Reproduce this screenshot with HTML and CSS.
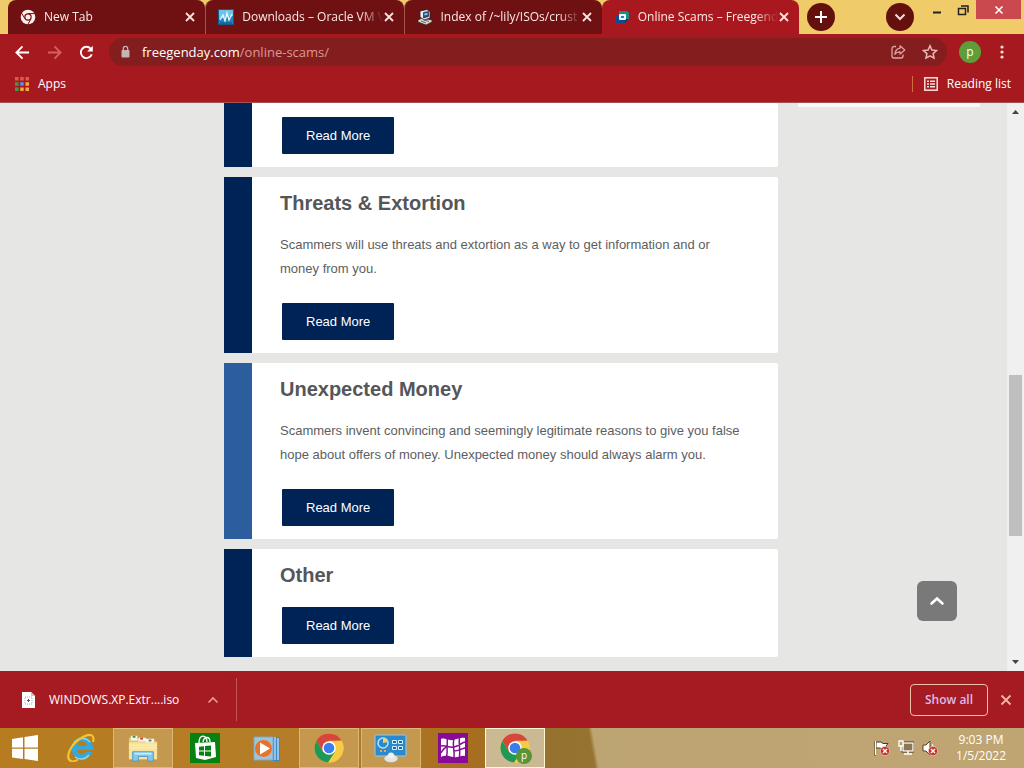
FILE: index.html
```html
<!DOCTYPE html>
<html lang="en">
<head>
<meta charset="utf-8">
<title>Online Scams – Freegenday</title>
<link rel="stylesheet" href="styles.css">
</head>
<body>
<svg class="defs" aria-hidden="true">
  <symbol id="cross" viewBox="0 0 12 12"><path d="M2 2l8 8M10 2l-8 8" fill="none" stroke="currentColor" stroke-width="1.800"/></symbol>
  <symbol id="chrome" viewBox="0 0 30 30">
    <circle cx="15" cy="15" r="14.5" fill="#f4c63b"/>
    <path d="M2.4 7.8A14.5 14.5 0 0 1 27.6 7.8L15 8.3 8.7 18.6z" fill="#d8453a"/>
    <path d="M2.4 7.8A14.5 14.5 0 0 0 14.2 29.5L21.3 18.6 8.7 18.6z" fill="#1f9a55"/>
    <path d="M27.6 7.8H15L21.3 18.6 14.2 29.5A14.5 14.5 0 0 0 27.6 7.8z" fill="#f8cb45"/>
    <circle cx="15" cy="15" r="6.8" fill="#fff"/><circle cx="15" cy="15" r="5.3" fill="#3b7ded"/>
  </symbol>
  <symbol id="badge" viewBox="0 0 10 10"><circle cx="5" cy="5" r="4.6" fill="#c8322e" stroke="#f0c8b8" stroke-width=".7"/><path d="M3 3l4 4M7 3L3 7" stroke="#fff" stroke-width="1.4"/></symbol>
</svg>

<header class="browser">
  <div class="tabstrip">
    <nav class="tabs" aria-label="Tabs">
      <div class="tab">
        <svg class="favicon" viewBox="0 0 16 16"><circle cx="8" cy="8" r="7.3" fill="#fbefed"/><circle cx="8" cy="8" r="3.7" fill="#6f1013"/><circle cx="8" cy="8" r="2.5" fill="#fbefed"/><path d="M8 4.6h6.8M5 9.8L1.500 4M11 9.800L7.800 15.500" stroke="#6f1013" stroke-width="1"/></svg>
        <a class="tab-title" href="#new">New Tab</a>
        <button class="close" aria-label="Close New Tab"><svg><use href="#cross"/></svg></button>
      </div>
      <div class="tab">
        <svg class="favicon" viewBox="0 0 16 16"><rect x=".5" y=".5" width="15" height="15" fill="#1f83bd" stroke="#155a87"/><path d="M1 1h14v6L1 10z" fill="#6dc2e8"/><path d="M2 11l3-5 2 6 2-8 2 7 3-6" fill="none" stroke="#e6f8ff" stroke-width="1.3"/><path d="M2 14h12" stroke="#124d79"/></svg>
        <a class="tab-title" href="#downloads">Downloads – Oracle VM V</a>
        <button class="close" aria-label="Close Downloads"><svg><use href="#cross"/></svg></button>
      </div>
      <div class="tab">
        <svg class="favicon" viewBox="0 0 16 16"><path d="M1 11l4-2 10 2v2l-6 3-8-3z" fill="#ddd8cc" stroke="#222" stroke-width=".7"/><path d="M3 2l7-1.500 3 2V9L7 11 3 8z" fill="#f1eee4" stroke="#222" stroke-width=".8"/><path d="M6.500 3.500l5-1v5L6.500 9z" fill="#204fa3" stroke="#111" stroke-width=".6"/><path d="M7.500 4.500l3-.8v2l-3 .8z" fill="#8dc4f3"/><path d="M4 12l5 2M7 11l5 1.500" stroke="#333" stroke-width=".7"/></svg>
        <a class="tab-title" href="#index">Index of /~lily/ISOs/crust</a>
        <button class="close" aria-label="Close Index"><svg><use href="#cross"/></svg></button>
      </div>
      <div class="tab current">
        <svg class="favicon" viewBox="0 0 16 16"><path d="M5 2h8l2 2v6H5z" fill="#168f88"/><path d="M1 6h10v8H1z" fill="#134b91"/><path d="M11 10h3l-3 4z" fill="#0b3764"/><rect x="5" y="5" width="7" height="6" rx="1" fill="#eff8ff"/><rect x="7" y="7" width="3" height="2" fill="#1787b7"/></svg>
        <a class="tab-title" href="#scams" aria-current="page">Online Scams – Freegend</a>
        <button class="close" aria-label="Close Online Scams"><svg><use href="#cross"/></svg></button>
      </div>
    </nav>
    <button class="round new-tab" aria-label="New tab"><svg viewBox="0 0 12 12"><path d="M6 0v12M0 6h12" stroke="#fff" stroke-width="2"/></svg></button>
    <button class="round" aria-label="Search tabs"><svg viewBox="0 0 12 12"><path d="M1.5 3.5L6 8l4.500-4.500" fill="none" stroke="#f6dcd6" stroke-width="2"/></svg></button>
    <div class="window-controls">
      <button aria-label="Minimize"><svg viewBox="0 0 12 12"><path d="M2 8.500h8" stroke="#222" stroke-width="2"/></svg></button>
      <button aria-label="Restore"><svg viewBox="0 0 12 12"><path d="M1.500 4.500h7v6h-7zM4 2h7v6.500" fill="none" stroke="#222" stroke-width="1.500"/></svg></button>
      <button class="quit" aria-label="Close"><svg viewBox="0 0 12 12"><path d="M2.500 2.500l7 7M9.500 2.500l-7 7" stroke="#fff" stroke-width="1.600"/></svg></button>
    </div>
  </div>

  <div class="toolbar">
    <button class="tool" aria-label="Back"><svg viewBox="0 0 16 16"><path d="M15 8H2M8 1.500L1.500 8 8 14.500" fill="none" stroke="#fff" stroke-width="2"/></svg></button>
    <button class="tool" aria-label="Forward"><svg viewBox="0 0 16 16"><path d="M1 8h13M8 1.500L14.500 8 8 14.500" fill="none" stroke="#d4605d" stroke-width="2"/></svg></button>
    <button class="tool" aria-label="Reload"><svg viewBox="0 0 16 16"><path d="M13.600 10A6 6 0 1 1 12.500 4" fill="none" stroke="#fff" stroke-width="2"/><path d="M14.700.800v6H8.700z" fill="#fff"/></svg></button>
    <div class="address">
      <svg class="lock" viewBox="0 0 10 14"><rect x="1" y="5" width="8" height="7.500" rx="1" fill="#c4b4b5"/><path d="M2.800 5V3.600a2.200 2.200 0 0 1 4.400 0V5" fill="none" stroke="#c4b4b5" stroke-width="1.300"/></svg>
      <a class="url" href="#scams">freegenday.com<span>/online-scams/</span></a>
      <button class="small" aria-label="Share"><svg viewBox="0 0 16 16"><path d="M6 2.500H4a2 2 0 0 0-2 2V12a2 2 0 0 0 2 2h7a2 2 0 0 0 2-2v-1.500" fill="none" stroke="#dda7a5" stroke-width="1.300"/><path d="M10 1.800L14.800 6 10 10V7.800C7.500 7.600 6 8.500 4.800 10.300 5.200 7 6.800 4.700 10 4.200z" fill="none" stroke="#dda7a5" stroke-width="1.200" stroke-linejoin="round"/></svg></button>
      <button class="small" aria-label="Bookmark"><svg viewBox="0 0 16 16"><path d="M8 1.800l1.900 4.200 4.600.5-3.400 3.100.9 4.500L8 11.800l-4 2.300.9-4.500L1.500 6.500 6.100 6z" fill="none" stroke="#e9b9b5" stroke-width="1.500"/></svg></button>
    </div>
    <button class="avatar" aria-label="Profile">p</button>
    <button class="menu" aria-label="Menu"><svg viewBox="0 0 4 14"><g fill="#f6dcd6"><circle cx="2" cy="2" r="1.600"/><circle cx="2" cy="7" r="1.600"/><circle cx="2" cy="12" r="1.600"/></g></svg></button>
  </div>

  <nav class="bookmarks" aria-label="Bookmarks">
    <a href="#apps"><svg class="apps" viewBox="0 0 14 14"><g fill="#e5574e"><path d="M0 0h3.500v3.500H0zM5.200 0h3.500v3.500H5.200zM10.500 0H14v3.500h-3.500z"/></g><path d="M0 5.200h3.500v3.500H0zM0 10.500h3.500V14H0z" fill="#3f9a4e"/><path d="M5.200 5.200h3.500v3.500H5.200z" fill="#5a8df0"/><path d="M10.500 5.200H14v3.500h-3.500zM5.200 10.500h3.500V14H5.200zM10.500 10.500H14V14h-3.500z" fill="#f4a93c"/></svg>Apps</a>
    <a class="reading" href="#reading"><svg class="list" viewBox="0 0 14 14"><rect x=".8" y=".8" width="12.400" height="12.400" fill="none" stroke="#f8e2dc" stroke-width="1.500"/><path d="M3 4.200h2M6 4.200h5M3 7h2M6 7h5M3 9.800h2M6 9.800h5" stroke="#f8e2dc" stroke-width="1.500"/></svg>Reading list</a>
  </nav>
</header>

<div class="viewport">
  <div class="page">
    <main class="cards">
      <article class="card"><a class="more" href="#more">Read More</a></article>
      <article class="card">
        <h2>Threats &amp; Extortion</h2>
        <p>Scammers will use threats and extortion as a way to get information and or money from you.</p>
        <a class="more" href="#threats">Read More</a>
      </article>
      <article class="card light">
        <h2>Unexpected Money</h2>
        <p>Scammers invent convincing and seemingly legitimate reasons to give you false hope about offers of money. Unexpected money should always alarm you.</p>
        <a class="more" href="#money">Read More</a>
      </article>
      <article class="card">
        <h2>Other</h2>
        <a class="more" href="#other">Read More</a>
      </article>
    </main>
    <aside class="side"></aside>
    <button class="to-top" aria-label="Back to top"><svg viewBox="0 0 16 16"><path d="M2.500 10.500L8 5.500l5.500 5" fill="none" stroke="#fff" stroke-width="2.600" stroke-linecap="round"/></svg></button>
  </div>
  <div class="scrollbar" aria-hidden="true">
    <svg viewBox="0 0 17 17"><path d="M5 11h7L8.500 7z" fill="#444"/></svg>
    <div class="track"><div class="before"></div><div class="thumb"></div><div class="after"></div></div>
    <svg viewBox="0 0 17 17"><path d="M5 6h7l-3.500 4z" fill="#444"/></svg>
  </div>
</div>

<section class="downloads" aria-label="Downloads">
  <div class="download">
    <svg class="file" viewBox="0 0 13 16"><path d="M0 0h9l4 4v12H0z" fill="#fff"/><path d="M9 0v4h4z" fill="#c8c8c8"/><rect x="3" y="5" width="7" height="7" fill="none" stroke="#aaa" stroke-dasharray="1 1"/><path d="M6.500 7v3M5 8.500h3" stroke="#555"/></svg>
    <a href="#file">WINDOWS.XP.Extr....iso</a>
    <button aria-label="Download options"><svg viewBox="0 0 12 12"><path d="M1.500 8.500L6 4l4.500 4.500" fill="none" stroke="#ee9c94" stroke-width="1.600"/></svg></button>
  </div>
  <button class="show-all">Show all</button>
  <button class="dismiss" aria-label="Close downloads"><svg viewBox="0 0 12 12"><path d="M1.500 1.500l9 9M10.500 1.500l-9 9" stroke="#f0b9a8" stroke-width="1.800"/></svg></button>
</section>

<footer class="taskbar">
  <button class="start" aria-label="Start"><svg viewBox="0 0 28 28"><path d="M1 5l11-1.800v10.200H1zM13.500 3L27 1v12.400H13.500zM1 14.800h11V25L1 23.400zM13.500 14.800H27V27l-13.500-2z" fill="#fff"/></svg></button>
  <button class="task" aria-label="Internet Explorer"><svg viewBox="0 0 30 30"><path d="M16 4a11 11 0 1 0 10.500 15h-6.300A5 5 0 0 1 11 17h16A11 11 0 0 0 16 4zM11 13a5 5 0 0 1 10 0z" fill="#35a9de" fill-rule="evenodd"/><path d="M7 12a10 10 0 0 1 17-3" fill="none" stroke="#8bdaf5" stroke-width="1.500"/><path d="M9 24a10 10 0 0 0 14-2" fill="none" stroke="#8bdaf5" stroke-width="1.500"/><path d="M5 28C-2 25 5 10 17 4c8-4 12-2 10 5" fill="none" stroke="#f6c42d" stroke-width="2.200"/><path d="M4 27.500c3 1.500 6 .5 8-1" fill="none" stroke="#f6c42d" stroke-width="1.600"/></svg></button>
  <button class="task open" aria-label="File Explorer"><svg viewBox="0 0 32 30"><path d="M1 4h8l2 2h7l2 2h11v19H1z" fill="#e5c879"/><path d="M3 2h7v5H3zM11 4h8v4h-8zM19 5h9v5h-9z" fill="#f8f5e6"/><path d="M5 2h3v2H5z" fill="#2e9c3c"/><path d="M13 4h3v2h-3z" fill="#d33f2e"/><path d="M22 6h3v2h-3z" fill="#378e91"/><path d="M1 9h30v18H1z" fill="#f6e49d"/><path d="M1 15h30M1 12h30" stroke="#ffefb9"/><path d="M5 29V19h22v10h-6v-5H11v5z" fill="#85c8ea" stroke="#4a9acb"/><path d="M7 21h18" stroke="#c6edff" stroke-width="2"/></svg></button>
  <button class="task" aria-label="Store"><svg viewBox="0 0 30 30"><path d="M0 0h30v30H0z" fill="#078212"/><path d="M5 10l20-1 1 15-11 3-9-2z" fill="#fff"/><path d="M9 10c0-9 8-9 8-1M13 9c1-6 7-6 7 0" fill="none" stroke="#fff" stroke-width="1.300"/><path d="M9 13.800l5-.6v4.300H9zM15 13l6-.6v5.100h-6zM9 18.500h5v4.300l-5-.6zM15 18.500h6v5.100l-6-.700z" fill="#078212"/></svg></button>
  <button class="task" aria-label="Media Player"><svg viewBox="0 0 30 30"><path d="M20 4h8v24h-8z" fill="#3f88c4"/><path d="M23 4v23M26 5v22" stroke="#bfe2f7" stroke-width="1.300"/><path d="M2 4h19v23H2z" fill="#9ec4dc" stroke="#79aace"/><circle cx="11.500" cy="15.500" r="8.500" fill="#e8742c"/><path d="M8 9.500l10 6-10 6z" fill="#fff"/></svg></button>
  <button class="task open" aria-label="Chrome"><svg><use href="#chrome"/></svg></button>
  <button class="task open" aria-label="Control Panel"><svg class="wide" viewBox="0 0 34 30"><rect x="1" y="2" width="31" height="21" rx="1" fill="#2a8ad0" stroke="#8dccef"/><circle cx="9" cy="10" r="5" fill="none" stroke="#b9e2f7" stroke-width="1.500"/><path d="M9 10V5a6 6 0 0 1 5 4z" fill="#f4cf61"/><path d="M18.500 7.500h4v3h-4zM24.500 7.500h4v3h-4zM18.500 13.500h4v3h-4zM24.500 13.500h4v3h-4z" fill="#1767a4" stroke="#d8f2ff"/><path d="M6 18h2M10 18h2" stroke="#f5a33a" stroke-width="2"/><ellipse cx="17" cy="25.500" rx="7" ry="4" fill="#e6e5df" stroke="#a4a29c" stroke-width=".6"/><circle cx="17" cy="22.500" r="3" fill="#f2f1ec"/></svg></button>
  <button class="task" aria-label="Maps"><svg viewBox="0 0 30 30"><path d="M0 0h30v30H0z" fill="#890a96"/><path d="M3 6c4-1.500 7 2 12 1s8-3 12-2v18c-4-1-7 2-12 1S7 22 3 24z" fill="#fff"/><path d="M9.500 5c-1 6 .5 12-1 20M16 6c-2 6 1 12 0 19M21.500 4c-1 6 1 12 0 20M3 13c5-1 8 2 13 1s7-4 11-5M3 20c2-4 4-6 7-6M16 18c4 0 7-2 11-3" fill="none" stroke="#890a96" stroke-width="1.500"/></svg></button>
  <button class="task open active" aria-label="Chrome profile p"><svg><use href="#chrome"/></svg><span class="profile">p</span></button>
  <div class="tray">
    <svg viewBox="0 0 16 16"><path d="M1 1v15M2 2h5l2 1.500h5L12 6l2 3H8L6 8H2z" fill="#fff" stroke="#4a3923"/><path d="M1.500 1v14" stroke="#fff"/><use href="#badge" x="6" y="6" width="10" height="10"/></svg>
    <svg viewBox="0 0 16 16"><rect x="5" y="3" width="10" height="8" fill="#a18b60" stroke="#4a3923" stroke-width="3"/><rect x="5" y="3" width="10" height="8" fill="#8c7951" stroke="#fff" stroke-width="1.300"/><path d="M6 14h8M10 11v3M3 6v5" fill="none" stroke="#fff" stroke-width="1.500"/><path d="M1 1h4v5H1z" fill="#b69e6e" stroke="#fff" stroke-width="1.300"/></svg>
    <svg viewBox="0 0 16 16"><path d="M1 5h3l4-4v14l-4-4H1z" fill="#fff" stroke="#5a462a"/><path d="M10 4q3 3 1 7" fill="none" stroke="#fff"/><use href="#badge" x="6" y="6" width="10" height="10"/></svg>
  </div>
  <time class="clock" datetime="2022-01-05T21:03"><span>9:03 PM</span><span>1/5/2022</span></time>
</footer>
</body>
</html>
```
FILE: styles.css
```css
* { box-sizing: border-box; }

body {
  margin: 0;
  height: 100vh;
  display: flex;
  flex-direction: column;
  overflow: hidden;
  font: 12px/16px "Open Sans", "Noto Sans", sans-serif;
  color: #fff;
}

a { color: inherit; text-decoration: none; }

button {
  display: flex;
  align-items: center;
  justify-content: center;
  padding: 0;
  border: 0;
  background: none;
  color: inherit;
  font: inherit;
}

.defs { position: absolute; width: 0; height: 0; }

/* Tab strip */
.browser { background: #a61a1f; border-bottom: 1px solid #a5514f; }

.tabstrip {
  display: flex;
  height: 34px;
  padding-left: 8px;
  background: #f0cb6a;
}

.tabs { display: flex; flex: 0 1 791px; min-width: 0; }

.tab {
  display: flex;
  flex: 1;
  align-items: center;
  min-width: 0;
  padding: 0 9px 0 12px;
  border-radius: 8px 8px 0 0;
  background: #6f1013;
}

.tab + .tab { border-left: 1px solid #a2554a; }
.tab.current { background: #a9181e; border-left: 0; }

.favicon { flex: none; width: 16px; height: 16px; margin-right: 8px; }

.tab-title {
  flex: 1;
  overflow: hidden;
  white-space: nowrap;
  color: #fbe9e5;
  mask-image: linear-gradient(to right, #000 84%, transparent);
}

.close { flex: none; width: 12px; height: 16px; color: #fbe4df; }
.close svg { width: 12px; height: 12px; }

.round {
  width: 28px;
  height: 28px;
  margin: 3px 0 0 auto;
  border-radius: 50%;
  background: #64110e;
}

.round svg { width: 12px; height: 12px; }
.new-tab { margin-left: 8px; }

.window-controls { display: flex; height: 19px; margin: 0 3px 0 10px; }
.window-controls button { width: 26px; }
.window-controls svg { width: 12px; height: 12px; }
.window-controls .quit { width: 45px; background: #c9494f; }

/* Toolbar */
.toolbar { display: flex; align-items: center; height: 36px; padding: 0 8px 0 6px; }
.tool { width: 32px; height: 32px; }
.tool svg { width: 15px; height: 15px; }

.address {
  display: flex;
  flex: 1;
  align-items: center;
  height: 28px;
  margin: 0 12px 0 7px;
  padding: 0 1px 0 11px;
  border-radius: 14px;
  background: #831d1e;
}

.lock { width: 11px; height: 14px; margin-right: 11px; }
.url { flex: 1; font-size: 13px; }
.url span { color: #dc9896; }
.small { width: 32px; height: 28px; }
.small svg { width: 16px; height: 16px; }

.avatar {
  width: 22px;
  height: 22px;
  border-radius: 50%;
  background: #5f9d3a;
}

.menu { width: 28px; height: 28px; margin-left: 7px; }
.menu svg { width: 4px; height: 14px; }

/* Bookmarks */
.bookmarks {
  display: flex;
  align-items: center;
  justify-content: space-between;
  height: 32px;
  padding: 0 13px 4px 15px;
}

.bookmarks a { display: flex; align-items: center; }
.bookmarks svg { width: 14px; height: 14px; }
.apps { margin-right: 9px; }
.list { margin-right: 9px; }
.reading { padding-left: 11px; border-left: 1px solid #d46a3e; }

/* Page */
.viewport { display: flex; flex: 1; min-height: 0; background: #e6e6e4; }

.page {
  position: relative;
  display: grid;
  flex: 1;
  grid-template-columns: minmax(0, 1fr) 182px;
  align-items: start;
  column-gap: 20px;
  overflow: hidden;
  padding: 0 27px 0 224px;
  font-family: "Liberation Sans", Arial, sans-serif;
}

.cards { display: flex; flex-direction: column; gap: 10px; }

.card {
  padding: 14px 28px 13px;
  border-left: 28px solid #002355;
  border-radius: 0 2px 2px 0;
  background: #fff;
}

.card.light { border-left-color: #2c5d9c; }

.card h2 {
  margin: 0 0 18px;
  color: #54565a;
  font-size: 20px;
  line-height: 24px;
}

.card p {
  margin: 0 0 22px;
  color: #5c5e62;
  font-size: 13px;
  line-height: 24px;
}

.more {
  display: block;
  width: fit-content;
  margin: 20px 0 0 2px;
  padding: 0 24px;
  border-radius: 1px;
  background: #002355;
  font-size: 13px;
  font-weight: 500;
  line-height: 37px;
}

.more:first-child { margin-top: 0; }

.side { height: 4px; background: #f8f8f7; }

.to-top {
  position: absolute;
  right: 50px;
  bottom: 50px;
  width: 40px;
  height: 40px;
  border-radius: 6px;
  background: #797979;
}

.to-top svg { width: 16px; height: 16px; }

.scrollbar { display: flex; flex: none; flex-direction: column; width: 17px; background: #f0f0f0; }
.scrollbar svg { flex: none; width: 17px; height: 17px; }
.track { display: flex; flex: 1; flex-direction: column; padding: 0 2px; }
.before { flex: 255; }
.thumb { flex: 161; background: #bfbfbf; }
.after { flex: 118; }

/* Downloads */
.downloads { display: flex; align-items: center; height: 57px; padding-right: 12px; background: #a61a21; }

.download {
  display: flex;
  align-items: center;
  height: 43px;
  padding: 0 15px 0 22px;
  border-right: 1px solid #c65653;
}

.file { width: 13px; height: 16px; margin-right: 14px; }
.download button { width: 16px; height: 16px; margin-left: 26px; }
.download button svg { width: 12px; height: 12px; }

.show-all {
  width: 78px;
  height: 32px;
  margin-left: auto;
  border: 1px solid #ecc0a8;
  border-radius: 4px;
  color: #dcbcec;
  font-weight: 600;
}

.dismiss { width: 12px; height: 12px; margin-left: 12px; }
.dismiss svg { width: 12px; height: 12px; }

/* Taskbar */
.taskbar {
  display: flex;
  align-items: center;
  height: 40px;
  padding-right: 18px;
  background:
    linear-gradient(80deg, transparent 586px, #bda473 590px, #bfa572),
    linear-gradient(to right, #b77c20, #b57d28 300px, #a86e20 470px, #95732f 545px, #947238);
}

.start { width: 50px; height: 40px; }
.start svg { width: 28px; height: 28px; }

.task {
  position: relative;
  width: 60px;
  height: 40px;
  margin: 0 1px;
  border: 1px solid transparent;
}

.task svg { width: 30px; height: 30px; }
.task .wide { width: 34px; }
.task.open { border-color: #dcb877; background: #c4984f; }
.task.active { border-color: #fff6d4; background: #cbb994; }

.profile {
  position: absolute;
  right: 12px;
  bottom: 3px;
  width: 16px;
  height: 16px;
  border-radius: 50%;
  background: #5a9438;
  font-size: 10px;
  line-height: 15px;
}

.tray { display: flex; gap: 8px; margin-left: auto; }
.tray svg { width: 16px; height: 16px; }

.clock {
  display: flex;
  flex-direction: column;
  align-items: center;
  margin-left: 18px;
}
```
